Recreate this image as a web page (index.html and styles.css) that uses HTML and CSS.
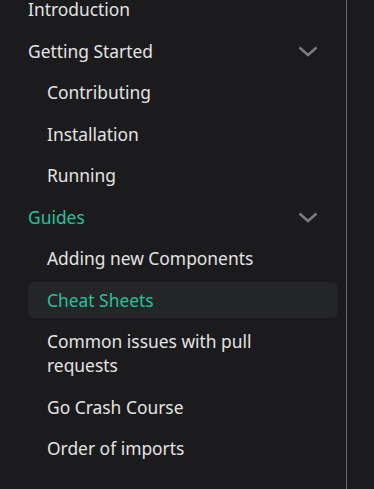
FILE: index.html
```html
<!DOCTYPE html>
<html>
<head>
<meta charset="utf-8">
<link rel="stylesheet" href="styles.css">
</head>
<body>
<nav class="sidebar">
  <ul class="menu">
    <li><a class="link">Introduction</a></li>
    <li>
      <div class="cat"><a class="link">Getting Started</a><svg class="caret" viewBox="0 0 24 24" width="24" height="24"><path d="M3.5 8.5 L12 16 L20.5 8.5" fill="none" stroke="currentColor" stroke-width="2.6"/></svg></div>
      <ul class="sub">
        <li><a class="link">Contributing</a></li>
        <li><a class="link">Installation</a></li>
        <li><a class="link">Running</a></li>
      </ul>
    </li>
    <li>
      <div class="cat"><a class="link active">Guides</a><svg class="caret" viewBox="0 0 24 24" width="24" height="24"><path d="M3.5 8.5 L12 16 L20.5 8.5" fill="none" stroke="currentColor" stroke-width="2.6"/></svg></div>
      <ul class="sub">
        <li><a class="link">Adding new Components</a></li>
        <li><a class="link active current">Cheat Sheets</a></li>
        <li><a class="link">Common issues with pull requests</a></li>
        <li><a class="link">Go Crash Course</a></li>
        <li><a class="link">Order of imports</a></li>
      </ul>
    </li>
  </ul>
</nav>
</body>
</html>
```
FILE: styles.css
```css
html, body {
  margin: 0;
  padding: 0;
  background: #1b1b1d;
  height: 100%;
  overflow: hidden;
}
body {
  font-family: "Noto Sans", "Open Sans", sans-serif;
  font-size: 17.4px;
  color: #e3e3e3;
}
.sidebar {
  display: flow-root;
  width: 346px;
  height: 100%;
  border-right: 1px solid #606770;
}
.menu {
  list-style: none;
  margin: -9px 0 0 0;
  padding: 0 8px 0 28px;
}
.menu ul {
  list-style: none;
  margin: 0;
  padding: 0;
}
.menu li {
  margin-top: 5.5px;
}
.menu > li:first-child {
  margin-top: 0;
}
.link {
  display: block;
  line-height: 24px;
  padding: 6px 0;
  color: #e3e3e3;
  border-radius: 6px;
}
.sub .link {
  padding: 6px 40px 6px 19px;
}
.active {
  color: #25c2a0;
}
.current {
  background: #242526;
}
.cat {
  display: flex;
  align-items: center;
}
.cat .link {
  flex: 1;
}
.caret {
  color: #7a7b7d;
  margin-right: 18px;
  flex: none;
}
```
